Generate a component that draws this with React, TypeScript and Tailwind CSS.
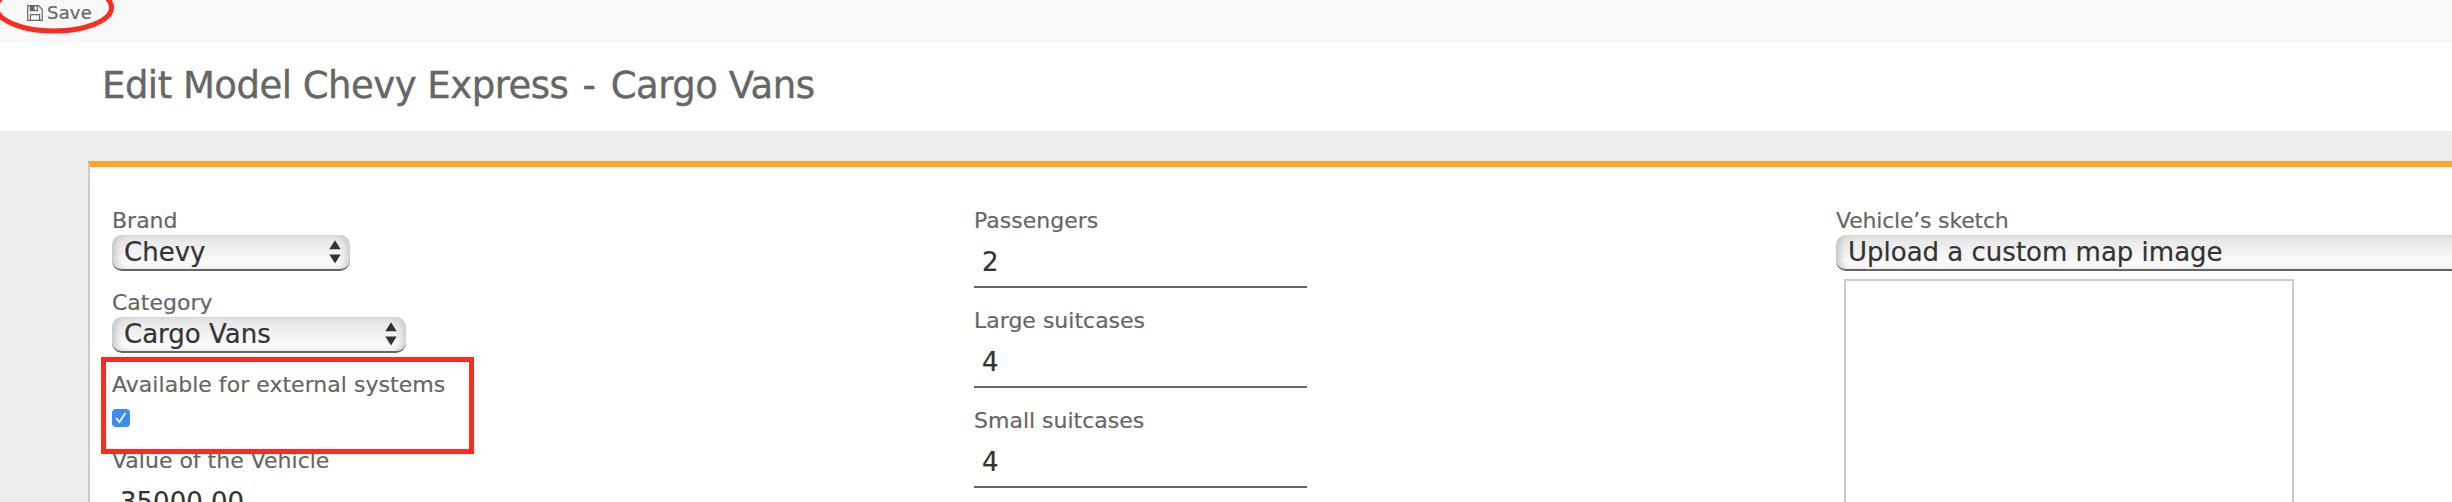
import type { ReactNode } from "react";

function SaveIcon() {
  return (
    <svg width="16" height="16" viewBox="0 0 16 16" fill="none" stroke="#666" strokeWidth="1.2">
      <path d="M.7.7H11.5L15.3 4.5v10.8H.7Z" />
      <path d="M3.4 15.3V9.6h9.2v5.7M3.4.7v4.9h7V.7" />
      <path d="M3.5 1h4v4.4h-4z" fill="#666" stroke="none" />
    </svg>
  );
}

function Arrows() {
  return (
    <svg width="12" height="24" viewBox="0 0 12 24" fill="#333">
      <path d="M6 .3 11.7 9.3H.3ZM6 23.4.3 14.4h11.4Z" />
    </svg>
  );
}

interface FieldProps {
  label: string;
  className?: string;
  labelClassName?: string;
  children: ReactNode;
}

function Field({ label, className = "", labelClassName = "", children }: FieldProps) {
  return (
    <div className={className}>
      <div
        className={`h-7 text-[22px] leading-[27px] whitespace-nowrap text-[#666] [-webkit-text-stroke:0.2px] ${labelClassName}`}
      >
        {label}
      </div>
      {children}
    </div>
  );
}

function Select({ value, className }: { value: string; className: string }) {
  return (
    <div
      className={`flex h-9 items-center justify-between rounded-[10px] border-b-2 border-[#666] bg-linear-to-b from-[#e4e4e4] to-white pr-[9px] pl-3 text-[26px] text-[#333] shadow-[inset_7px_0_8px_-4px_#bbb,inset_-7px_0_8px_-4px_#c4c4c4] ${className}`}
    >
      <span className="leading-8 whitespace-nowrap [-webkit-text-stroke:0.2px]">{value}</span>
      <Arrows />
    </div>
  );
}

function TextInput({ value }: { value: string }) {
  return (
    <div className="h-[53px] w-[333px] border-b-2 border-[#666] px-2 pt-2 text-[26px] leading-[38px] text-[#333] [-webkit-text-stroke:0.2px]">
      {value}
    </div>
  );
}

const capacities = [
  { label: "Passengers", value: "2" },
  { label: "Large suitcases", value: "4" },
  { label: "Small suitcases", value: "4" },
];

export default function App() {
  return (
    <div className="relative h-[502px] w-[2452px] overflow-hidden bg-[#ededed] font-['Verdana','DejaVu_Sans',sans-serif]">
      <div className="flex h-[43px] bg-[#f8f8f8] pl-[27px]">
        <button className="flex h-[25px] items-center gap-1 text-[18px] tracking-[0.2px] text-[#666] [-webkit-text-stroke:0.2px]">
          <SaveIcon />
          Save
        </button>
      </div>
      <header className="h-22 bg-white pt-[18px] pl-[102px]">
        <h1 className="text-[37px] leading-[50px] tracking-[-0.5px] whitespace-nowrap text-[#666] [-webkit-text-stroke:0.4px]">
          Edit Model Chevy Express <span className="mr-[4px] ml-[3px]">-</span> Cargo Vans
        </h1>
      </header>

      <main className="mt-[30px] ml-[88px] flex h-[400px] border-t-[6px] border-l-2 border-t-[#ffa229] border-l-[#ccc] bg-white pt-[39px] pl-[22px]">
        <section className="w-[862px] shrink-0">
          <Field label="Brand" className="h-[82px] pt-[1px]">
            <Select value="Chevy" className="w-[238px]" />
          </Field>
          <Field label="Category" className="h-[82px] pt-[1px]">
            <Select value="Cargo Vans" className="w-[294px]" />
          </Field>
          <Field
            label="Available for external systems"
            className="h-[76px] pt-[1px]"
            labelClassName="tracking-[0.03px]"
          >
            <div className="mt-[10px] flex size-[18px] items-center justify-center rounded-[4px] bg-[#3d8bfa]">
              <svg width="12" height="12" viewBox="0 0 12 12" fill="none" stroke="white" strokeWidth="1.8">
                <path d="m1.5 6.5 3 3.5L10 1.5" strokeLinecap="round" />
              </svg>
            </div>
          </Field>
          <Field label="Value of the Vehicle" className="pt-[1px]">
            <TextInput value="35000.00" />
          </Field>
        </section>

        <section className="w-[862px] shrink-0">
          {capacities.map((c) => (
            <Field key={c.label} label={c.label} className="h-[100px] pt-[1px]">
              <TextInput value={c.value} />
            </Field>
          ))}
        </section>

        <section className="w-[700px] shrink-0">
          <Field
            label="Vehicle’s sketch"
            className="pt-[1px]"
            labelClassName="tracking-[-0.2px]"
          >
            <Select value="Upload a custom map image" className="w-[700px]" />
            <div className="mt-2 ml-2 h-[300px] w-[450px] border-2 border-[#ccc]" />
          </Field>
        </section>
      </main>

      {/* highlight marks */}
      <svg className="absolute top-0 left-0" width="120" height="40" fill="none" stroke="#fd2a1f" strokeWidth="5">
        <ellipse cx="54" cy="7.5" rx="57.5" ry="23.5" />
      </svg>
      <div className="absolute top-[357px] left-[101px] h-[97px] w-[373px] border-5 border-[#fd2a1f]" />
    </div>
  );
}
